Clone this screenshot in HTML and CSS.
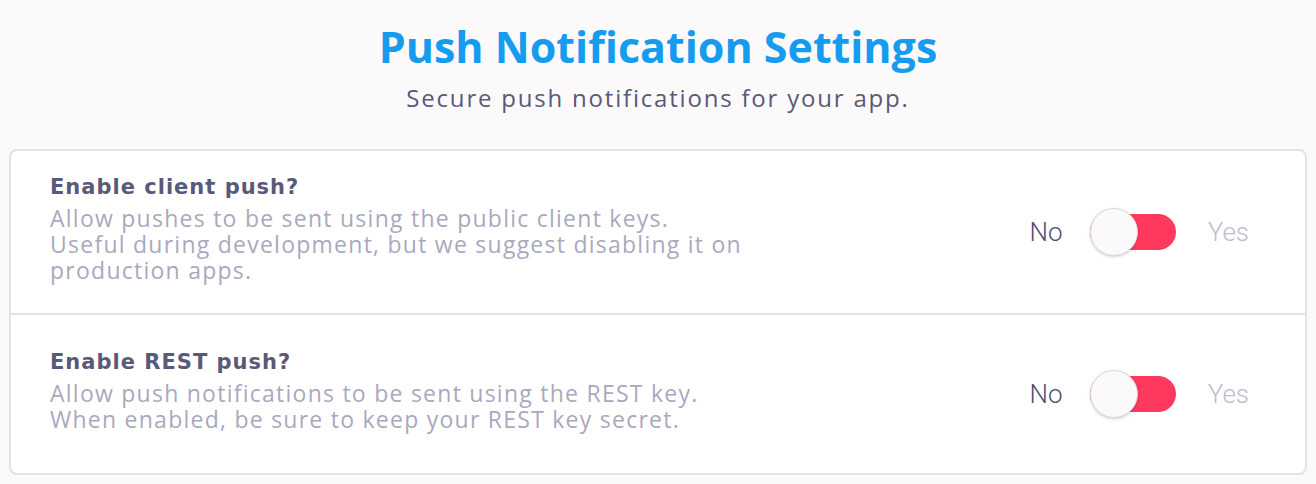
FILE: index.html
```html
<!DOCTYPE html>
<html>
<head>
<meta charset="utf-8">
<link rel="stylesheet" href="styles.css">
</head>
<body>
<div class="page">
  <header class="header">
    <h1 class="title">Push Notification Settings</h1>
    <p class="subtitle">Secure push notifications for your app.</p>
  </header>
  <section class="card">
    <div class="row">
      <div class="info">
        <div class="label">Enable client push?</div>
        <div class="desc">Allow pushes to be sent using the public client keys.<br>Useful during development, but we suggest disabling it on<br>production apps.</div>
      </div>
      <div class="toggle-group">
        <span class="opt opt-no">No</span>
        <span class="switch"><span class="knob"></span></span>
        <span class="opt opt-yes">Yes</span>
      </div>
    </div>
    <div class="row">
      <div class="info">
        <div class="label">Enable REST push?</div>
        <div class="desc">Allow push notifications to be sent using the REST key.<br>When enabled, be sure to keep your REST key secret.</div>
      </div>
      <div class="toggle-group">
        <span class="opt opt-no">No</span>
        <span class="switch"><span class="knob"></span></span>
        <span class="opt opt-yes">Yes</span>
      </div>
    </div>
  </section>
</div>
</body>
</html>
```

FILE: styles.css
```css
* { box-sizing: border-box; }
html, body { margin: 0; padding: 0; }
body {
  background: #fbf9f9;
  font-family: "Open Sans", "DejaVu Sans", sans-serif;
  width: 1316px;
  height: 484px;
  overflow: hidden;
}
.page {
  padding: 0 9px;
}
.header {
  display: flex;
  flex-direction: column;
  align-items: center;
  padding-top: 22px;
  height: 149px;
}
.title {
  margin: 0;
  font-family: "Open Sans", sans-serif;
  font-weight: 700;
  font-size: 43px;
  line-height: 50px;
  color: #169cee;
}
.subtitle {
  margin: 11px 0 0;
  font-family: "Open Sans", sans-serif;
  font-size: 24px;
  letter-spacing: 1.8px;
  line-height: 30px;
  color: #59597a;
}
.card {
  background: #fff;
  border: 2px solid #e3e3e6;
  border-radius: 8px;
}
.row {
  height: 162px;
  display: flex;
  align-items: center;
  justify-content: space-between;
  padding: 0 56px 6px 39px;
}
.row + .row {
  border-top: 2px solid #e3e3e6;
  height: 160px;
}
.label {
  font-family: "DejaVu Sans", "Open Sans", sans-serif;
  font-size: 21px;
  font-weight: 700;
  letter-spacing: 1px;
  line-height: 24px;
  margin-bottom: 6px;
  color: #59597a;
}
.desc {
  font-size: 23px;
  letter-spacing: 1.25px;
  line-height: 26px;
  color: #a9a9be;
}
.toggle-group {
  display: flex;
  align-items: center;
  padding-top: 5px;
}
.opt {
  font-family: "Roboto", "Open Sans", sans-serif;
  font-weight: 300;
  font-size: 26px;
}
.opt-no { color: #4f4f70; }
.opt-yes { color: #bdbdcc; }
.switch {
  position: relative;
  width: 86px;
  height: 36px;
  margin: 0 32px 0 27px;
  background: #ff395e;
  border-radius: 18px;
}
.knob {
  position: absolute;
  left: 0;
  top: 50%;
  width: 48px;
  height: 48px;
  margin-top: -24px;
  border-radius: 50%;
  background: #fbf9fa;
  border: 1px solid #d9d7da;
  box-shadow: 0 1px 3px rgba(0,0,0,0.18);
}
```
